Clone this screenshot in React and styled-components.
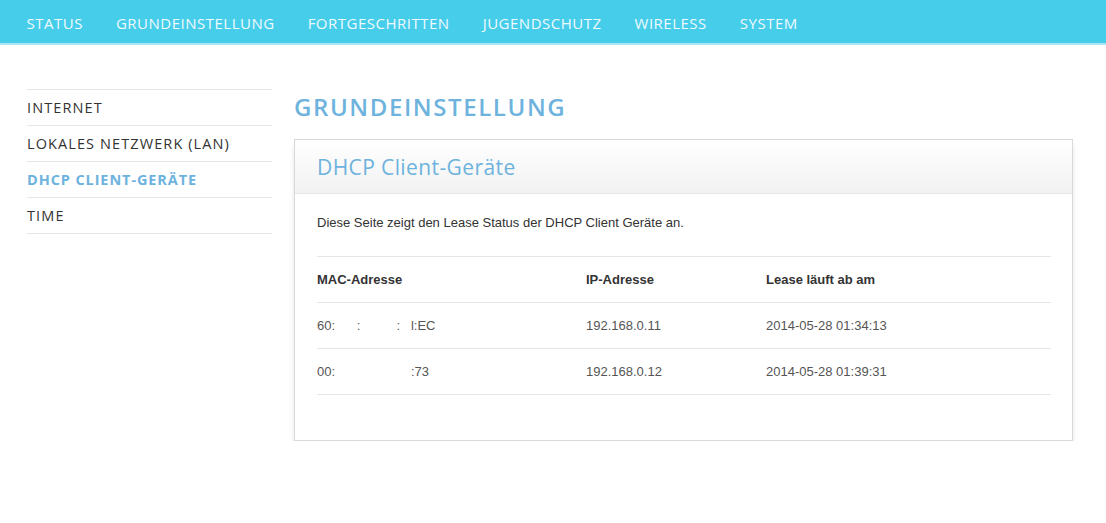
import React from "react";
import styled, { createGlobalStyle } from "styled-components";

const GlobalStyle = createGlobalStyle`
  html, body {
    margin: 0;
    padding: 0;
    background: #fff;
  }
  body {
    font-family: "Liberation Sans", Arial, sans-serif;
  }
`;

const TopBar = styled.nav`
  height: 43px;
  background: #46cdea;
  border-bottom: 2px solid #a9e5f3;
  display: flex;
  align-items: center;
  padding-left: 10px;
`;

const NavItem = styled.a`
  font-family: "Open Sans", sans-serif;
  font-size: 15px;
  letter-spacing: 0.5px;
  color: #eefaff;
  text-transform: uppercase;
  padding: 2px 16.5px 0;
  text-decoration: none;
  line-height: 40px;
`;

const Main = styled.div`
  display: flex;
  padding: 44px 0 0 27px;
  gap: 22px;
`;

const Sidebar = styled.ul`
  list-style: none;
  margin: 0;
  padding: 0;
  width: 245px;
  flex-shrink: 0;
  border-top: 1px solid #e8e8e8;
`;

const SideItem = styled.li`
  height: 35px;
  border-bottom: 1px solid #e8e8e8;
  display: flex;
  align-items: center;
  font-family: "Open Sans", sans-serif;
  font-size: 14.5px;
  letter-spacing: ${(p) => (p.active ? "0.9px" : "1.1px")};
  color: ${(p) => (p.active ? "#6db3dd" : "#333")};
  font-weight: ${(p) => (p.active ? 700 : 400)};
`;

const Content = styled.div`
  width: 779px;
`;

const PageTitle = styled.h1`
  margin: 0;
  padding-top: 3px;
  height: 47px;
  font-family: "Open Sans", sans-serif;
  font-weight: 600;
  font-size: 24px;
  letter-spacing: 1.6px;
  color: #6db3dd;
  line-height: 30px;
`;

const Panel = styled.section`
  border: 1px solid #d9d9d9;
  background: #fff;
  box-shadow: 0 5px 6px -2px rgba(0, 0, 0, 0.22);
`;

const PanelHeader = styled.div`
  height: 53px;
  background: linear-gradient(#fff, #f2f2f2);
  border-bottom: 1px solid #e6e6e6;
  display: flex;
  align-items: center;
  padding-left: 22px;
  font-family: "Open Sans", sans-serif;
  font-size: 21px;
  letter-spacing: 0.4px;
  color: #6db3dd;
`;

const PanelBody = styled.div`
  padding: 21px 21px 45px 22px;
`;

const Intro = styled.p`
  margin: 0 0 25px;
  font-size: 13px;
  color: #333;
  line-height: 16px;
`;

const Table = styled.table`
  width: 100%;
  border-collapse: collapse;
  font-size: 13px;
`;

const Th = styled.th`
  text-align: left;
  font-weight: 700;
  color: #333;
  height: 45px;
  border-top: 1px solid #e6e6e6;
  border-bottom: 1px solid #e6e6e6;
  padding: 0;
  width: ${(p) => p.w || "auto"};
`;

const Td = styled.td`
  color: #555;
  height: 45px;
  border-bottom: 1px solid #e6e6e6;
  padding: 0;
  white-space: pre;
`;

const clients = [
  { mac: "60:      :          :   l:EC", ip: "192.168.0.11", lease: "2014-05-28 01:34:13" },
  { mac: "00:                     :73", ip: "192.168.0.12", lease: "2014-05-28 01:39:31" },
];

const nav = ["Status", "Grundeinstellung", "Fortgeschritten", "Jugendschutz", "Wireless", "System"];
const side = ["Internet", "Lokales Netzwerk (LAN)", "DHCP Client-Geräte", "Time"];

const App = () => {
  return (
    <>
      <GlobalStyle />
      <TopBar>
        {nav.map((n) => (
          <NavItem key={n}>{n}</NavItem>
        ))}
      </TopBar>
      <Main>
        <Sidebar>
          {side.map((s, i) => (
            <SideItem key={s} active={i === 2}>
              {s.toUpperCase()}
            </SideItem>
          ))}
        </Sidebar>
        <Content>
          <PageTitle>GRUNDEINSTELLUNG</PageTitle>
          <Panel>
            <PanelHeader>DHCP Client-Geräte</PanelHeader>
            <PanelBody>
              <Intro>Diese Seite zeigt den Lease Status der DHCP Client Geräte an.</Intro>
              <Table>
                <thead>
                  <tr>
                    <Th w="269px">MAC-Adresse</Th>
                    <Th w="180px">IP-Adresse</Th>
                    <Th>Lease läuft ab am</Th>
                  </tr>
                </thead>
                <tbody>
                  {clients.map((c) => (
                    <tr key={c.ip}>
                      <Td>{c.mac}</Td>
                      <Td>{c.ip}</Td>
                      <Td>{c.lease}</Td>
                    </tr>
                  ))}
                </tbody>
              </Table>
            </PanelBody>
          </Panel>
        </Content>
      </Main>
    </>
  );
};

export default App;
